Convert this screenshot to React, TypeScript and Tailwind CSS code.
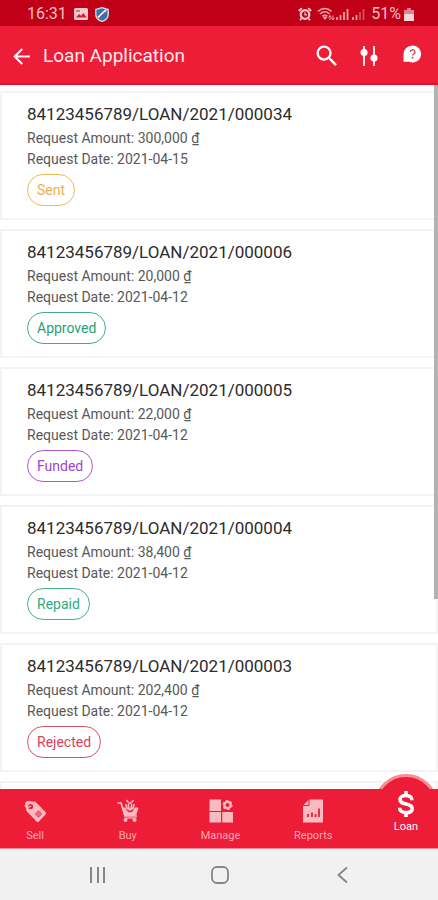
import { MdArrowBack, MdSearch } from "react-icons/md";

type Loan = { id: string; amount: string; date: string; status: string; tone: string };

const loans: Loan[] = [
  { id: "84123456789/LOAN/2021/000034", amount: "300,000", date: "2021-04-15", status: "Sent", tone: "border-[#eebb5c] text-[#eab04a]" },
  { id: "84123456789/LOAN/2021/000006", amount: "20,000", date: "2021-04-12", status: "Approved", tone: "border-[#46ab85] text-[#27a076]" },
  { id: "84123456789/LOAN/2021/000005", amount: "22,000", date: "2021-04-12", status: "Funded", tone: "border-[#ad5bd3] text-[#a144ce]" },
  { id: "84123456789/LOAN/2021/000004", amount: "38,400", date: "2021-04-12", status: "Repaid", tone: "border-[#46b58a] text-[#2fad7e]" },
  { id: "84123456789/LOAN/2021/000003", amount: "202,400", date: "2021-04-12", status: "Rejected", tone: "border-[#d9536b] text-[#d9415c]" },
];

function StatusBar() {
  return (
    <div className="flex h-[26px] shrink-0 items-center justify-between bg-[#c00016] pt-[2px] pr-6 pl-[27px] text-base text-[#f6bfc4]">
      <div className="flex items-center gap-[7px]">
        <span className="leading-none">16:31</span>
        <svg width="14" height="12" viewBox="0 0 14 12" aria-hidden="true">
          <rect width="14" height="12" rx="1.5" fill="#f8c9ce" />
          <path d="M2 9.500 5 6l2 1.800L9.500 5l3 4.500z" fill="#c62034" />
          <path d="M2 3h4" stroke="#c62034" />
        </svg>
        <svg width="14" height="15" viewBox="0 0 14 15" aria-hidden="true">
          <path d="M7 .7 13.200 2.500v5c0 3.300-2.500 5.700-6.200 6.900C3.300 13.200.8 10.800.8 7.500v-5z" fill="#2f74b5" stroke="#d9dbe6" strokeWidth="1.400" />
          <path d="M3 10.500 11 3" stroke="#e8edf3" strokeWidth="2" />
          <path d="m5 10 5-4.500" stroke="#c5404e" />
        </svg>
      </div>
      <div className="flex items-center gap-[5px]">
        <svg width="14" height="14" viewBox="0 0 14 14" fill="none" stroke="#f8c9ce" aria-hidden="true">
          <circle cx="7" cy="7.500" r="4.300" strokeWidth="2.200" />
          <path d="M.8 4 3.800 1.200M13.200 4l-3-2.800M3.500 11.500 2 13.200M10.500 11.500l1.500 1.700" strokeWidth="1.800" />
          <path d="M7 5.200v2.600h2" strokeWidth="1.200" />
        </svg>
        <svg width="49" height="14" viewBox="0 0 49 14" fill="none" stroke="#efa0a8" aria-hidden="true">
          <path d="M1 4.500c4-4 9.500-4 13.500 0M3 7c3-3 6.600-3 9.500 0M5.200 9.200c1.700-1.700 3.500-1.700 5.200 0" strokeWidth="1.600" />
          <path d="m6 10 2 2.500 2-2.500z" fill="#efa0a8" />
          <path d="M13 13V8.500m-1.500 2L13 8.500l1.500 2M16 8.500V13m-1.500-2 1.500 2 1.500-2" strokeWidth="1" />
          <path d="M20 13v-3M23.500 13V8M27 13V5M30.500 13V2" strokeWidth="1.800" />
          <path d="M36 13v-3M39.500 13V8" strokeWidth="1.800" />
          <path d="M43 13V5M46.500 13V2" strokeWidth="1.800" opacity=".5" />
        </svg>
        <div className="flex items-center gap-[3px]">
          <span className="leading-none">51%</span>
          <svg width="10" height="13" viewBox="0 0 10 13" aria-hidden="true">
            <path d="M3 0h4v2h3v5H0V2h3z" fill="#e27f8a" />
            <path d="M0 6h10v7H0z" fill="#fbd5d8" />
          </svg>
        </div>
      </div>
    </div>
  );
}

function Header() {
  return (
    <header className="flex h-[59px] shrink-0 items-center border-b-2 border-[#e30f2c] bg-[#ed1c37] pt-[3px] pr-4 pl-[9px] text-white">
      <button type="button" aria-label="Back">
        <MdArrowBack size={25} />
      </button>
      <h1 className="ml-[9px] grow text-[19px] leading-6 text-[#ffe9eb]">Loan Application</h1>
      <div className="flex items-center gap-[18px]">
        <button type="button" aria-label="Search">
          <MdSearch size={28} />
        </button>
        <button type="button" aria-label="Filter">
          <svg width="20" height="22" viewBox="0 0 20 22" fill="#fff" stroke="#fff" strokeWidth="1.800" aria-hidden="true">
            <path d="M5 1v20M15 1v20" />
            <circle cx="5" cy="7.500" r="2.700" />
            <circle cx="15" cy="13" r="2.700" />
          </svg>
        </button>
        <button type="button" aria-label="Help" className="ml-[5px] pb-1">
          <svg width="20" height="20" viewBox="0 0 20 20" aria-hidden="true">
            <path d="M10.500 1.500a8.500 8.500 0 1 1-3.300 16.300H1.500V10.500A8.900 8.900 0 0 1 10.500 1.500z" fill="#fff" />
            <path d="M8.300 8a2.300 2.300 0 1 1 3.300 2.100c-.8.400-1.100.8-1.100 1.500" fill="none" stroke="#df5265" strokeWidth="1.500" />
            <circle cx="10.500" cy="13.800" r="1" fill="#df5265" />
          </svg>
        </button>
      </div>
    </header>
  );
}

function LoanCard({ loan }: { loan: Loan }) {
  return (
    <li className="h-[129px] shrink-0 border-2 border-[#f3f3f3] bg-white pt-[9px] pl-[25px]">
      <h2 className="text-[17px] leading-6 text-[#2c2c2c]">{loan.id}</h2>
      <div className="mt-[2px] text-[14px] leading-[21px] text-[#585858]">
        <p>Request Amount: {loan.amount} ₫</p>
        <p>Request Date: {loan.date}</p>
      </div>
      <span className={`mt-1 inline-flex h-8 items-center rounded-full border px-[9px] text-[14px] ${loan.tone}`}>
        {loan.status}
      </span>
    </li>
  );
}

const SellIcon = () => (
  <svg width="24" height="24" viewBox="0 0 24 24" aria-hidden="true">
    <path d="M2 4 4 2l8.500.7L22.500 13c.8.900.8 1.600 0 2.400l-6.600 7c-.8.800-1.600.8-2.400 0L3.500 12z" fill="#fbb9c0" />
    <circle cx="7.500" cy="7.500" r="2.600" fill="#ed1c37" />
    <path d="M1.500 6.500c2.500 2.200 4.500 1.900 6.500.5" fill="none" stroke="#fbb9c0" strokeWidth="1.200" />
    <path d="m12.500 15 3-3 3 3-3 3zm1.500 0h3m-1.500-1.500v3" fill="none" stroke="#e9505f" strokeWidth="1.100" />
  </svg>
);

const BuyIcon = () => (
  <svg width="24" height="24" viewBox="0 0 24 24" fill="none" stroke="#fbb9c0" aria-hidden="true">
    <path d="M1.500 4H5l4 13h12" strokeWidth="1.700" />
    <path d="M6.500 9h3c.3 3 2.200 4.800 4.500 4.800s4.200-1.800 4.500-4.800H22l-2.500 7.500H9z" fill="#fbb9c0" />
    <path d="M14 3.500c-2 1.500-2.500 4 0 7 2.500-3 2-5.500 0-7zM10 5c-.2 3 1 5 4 6 3-1 4.200-3 4-6M10.500 1l2 2.500M17.500 1l-2 2.500" strokeWidth="1.500" />
    <circle cx="9.500" cy="21" r="2" fill="#fbb9c0" stroke="none" />
    <circle cx="18.500" cy="21" r="2" fill="#fbb9c0" stroke="none" />
    <path d="M8.500 19h12" strokeWidth="1.200" />
  </svg>
);

const ManageIcon = () => (
  <svg width="24" height="24" viewBox="0 0 24 24" fill="#fbb9c0" aria-hidden="true">
    <path d="M.5.500H12V12H.5zM.5 13H12v10.500H.5zM13.200 13h10.800v10.500H13.200z" />
    <circle cx="18.500" cy="6" r="3.200" fill="none" stroke="#fbb9c0" strokeWidth="2.400" />
    <circle cx="18.500" cy="6" r="4.500" fill="none" stroke="#fbb9c0" strokeWidth="1.200" strokeDasharray="2.360" />
  </svg>
);

const ReportsIcon = () => (
  <svg width="20" height="24" viewBox="0 0 20 24" aria-hidden="true">
    <path d="M6 .5h14v23H0V6.500z" fill="#fbb9c0" />
    <path d="M0 6.500h6v-6" fill="none" stroke="#ed1c37" strokeWidth="1" />
    <path d="M5 18v-3M9 18v-4.500M12.500 18v-3M16 18V9.500" stroke="#df3048" strokeWidth="2" />
  </svg>
);

const DollarIcon = () => (
  <svg width="18" height="26" viewBox="0 0 18 26" fill="none" stroke="#fff" strokeWidth="3.600" aria-hidden="true">
    <path d="M9 0v4.500M9 21v5" />
    <path d="M15 9.200c0-3-2.300-4.700-6-4.700S3 6.200 3 8.600c0 3 2.500 3.600 6 4.300s6.200 1.700 6.200 4.500-2.600 4.200-6.200 4.200-6.400-1.700-6.400-4.900" />
  </svg>
);

const tabs = [
  { label: "Sell", Icon: SellIcon },
  { label: "Buy", Icon: BuyIcon },
  { label: "Manage", Icon: ManageIcon },
  { label: "Reports", Icon: ReportsIcon },
];

function TabBar() {
  return (
    <nav className="relative flex h-[60px] shrink-0 justify-between border-b border-[#f58b98] bg-[#ed1c37] pl-[3px] text-[11px] leading-4">
      {tabs.map(({ label, Icon }) => (
        <button key={label} type="button" className="flex w-16 flex-col items-center gap-[5px] pt-[10px] text-[#fba9b2]">
          <Icon />
          {label}
        </button>
      ))}
      <button type="button" aria-current="page" className="relative flex w-16 flex-col items-center gap-[2px] pt-[2px] text-white">
        {/* Visible cap of the raised circle behind the active tab */}
        <span className="absolute bottom-full left-0 h-[15px] w-16 overflow-hidden">
          <span className="block size-16 rounded-full border-[3px] border-[#f78d99] bg-[#ed1c37]" />
        </span>
        <DollarIcon />
        Loan
      </button>
    </nav>
  );
}

function SystemNav() {
  return (
    <div className="flex h-[51px] shrink-0 items-center justify-around bg-[#f1f1f1] pr-[34px] pl-9 text-[#868686]">
      <button type="button" aria-label="Recent apps">
        <svg width="18" height="18" viewBox="0 0 18 18" stroke="currentColor" strokeWidth="2" aria-hidden="true">
          <path d="M3 1v16M10 1v16M16 1v16" />
        </svg>
      </button>
      <button type="button" aria-label="Home">
        <svg width="18" height="18" viewBox="0 0 18 18" fill="none" stroke="currentColor" strokeWidth="1.800" aria-hidden="true">
          <rect x="1" y="1" width="16" height="16" rx="5" />
        </svg>
      </button>
      <button type="button" aria-label="Go back">
        <svg width="18" height="18" viewBox="0 0 18 18" fill="none" stroke="currentColor" strokeWidth="1.900" aria-hidden="true">
          <path d="M13 1.500 4.500 9l8.500 7.500" />
        </svg>
      </button>
    </div>
  );
}

export default function App() {
  return (
    <div className="flex h-screen flex-col overflow-hidden bg-white font-[Roboto,'Liberation_Sans',sans-serif]">
      <StatusBar />
      <Header />
      <main className="relative min-h-0 grow overflow-hidden">
        <ul className="flex flex-col gap-[9px] pt-[6px]">
          {loans.map((loan) => (
            <LoanCard key={loan.id} loan={loan} />
          ))}
          <li className="h-[129px] shrink-0 border-2 border-[#f3f3f3]" />
        </ul>
        <div className="absolute top-0 right-0 h-[73%] w-1 bg-[#b2b2b2]" />
      </main>
      <TabBar />
      <SystemNav />
    </div>
  );
}
